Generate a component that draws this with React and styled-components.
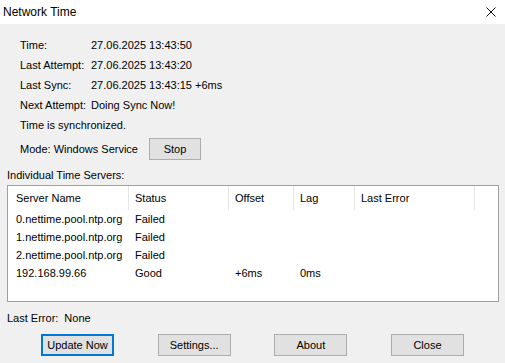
import React from 'react'
import styled, { createGlobalStyle } from 'styled-components';

const GlobalStyle = createGlobalStyle`
    html, body {
        margin: 0;
        padding: 0;
        background: #f0f0f0;
    }
    * {
        box-sizing: border-box;
    }
`;

const Window = styled.div`
    width: 505px;
    height: 363px;
    background: #f0f0f0;
    font-family: "Liberation Sans", Arial, sans-serif;
    font-size: 11px;
    color: #000;
    display: flex;
    flex-direction: column;
    overflow: hidden;
`;

const TitleBar = styled.div`
    height: 24px;
    background: #fff;
    display: flex;
    align-items: center;
    justify-content: space-between;
    padding: 0 8px 0 3px;
    font-size: 12px;
`;

const CloseIcon = styled.svg`
    width: 10px;
    height: 10px;
    margin-right: 1px;
`;

const InfoList = styled.div`
    display: grid;
    grid-template-columns: 71px auto;
    grid-auto-rows: 20px;
    align-items: center;
    padding-left: 20px;
    margin-top: 11px;
`;

const Wide = styled.div`
    grid-column: 1 / 3;
`;

const ModeRow = styled.div`
    display: flex;
    align-items: center;
    height: 22px;
    margin-top: 3px;
    padding-left: 20px;
`;

const ModeLabel = styled.span`
    width: 129px;
`;

const Button = styled.button`
    width: ${p => p.$w || 73}px;
    height: 22px;
    padding: 0;
    font-family: inherit;
    font-size: 11px;
    color: #000;
    background: #e1e1e1;
    border: 1px solid ${p => p.$default ? '#0078d7' : '#adadad'};
    box-shadow: ${p => p.$default ? 'inset 0 0 0 1px #0078d7' : 'none'};
    cursor: pointer;
`;

const GroupLabel = styled.div`
    line-height: 16px;
    margin-top: 7px;
    padding-left: 7px;
`;

const ListBox = styled.div`
    margin: 2px 0 0 7px;
    width: 492px;
    height: 117px;
    background: #fff;
    border: 1px solid #a0a0a0;
    display: grid;
    grid-template-columns: 121px 100px 65px 61px 120px 1fr;
    grid-template-rows: 24px repeat(4, 18px);
    align-content: start;
`;

const HeadCell = styled.div`
    display: flex;
    align-items: center;
    padding-left: ${p => p.$first ? 8 : 6}px;
    border-right: ${p => p.$last ? 'none' : '1px solid #e5e5e5'};
`;

const Cell = styled.div`
    display: flex;
    align-items: center;
    padding-left: ${p => p.$first ? 8 : 6}px;
`;

const StatusLine = styled.div`
    line-height: 16px;
    margin-top: 8px;
    padding-left: 7px;
    display: flex;
    gap: 6px;
`;

const ButtonRow = styled.div`
    display: flex;
    justify-content: space-between;
    padding: 0 41px;
    margin-top: 8px;
`;

const info = [
    ['Time:', '27.06.2025 13:43:50'],
    ['Last Attempt:', '27.06.2025 13:43:20'],
    ['Last Sync:', '27.06.2025 13:43:15 +6ms'],
    ['Next Attempt:', 'Doing Sync Now!'],
];

const columns = ['Server Name', 'Status', 'Offset', 'Lag', 'Last Error', ''];

const servers = [
    ['0.nettime.pool.ntp.org', 'Failed', '', '', ''],
    ['1.nettime.pool.ntp.org', 'Failed', '', '', ''],
    ['2.nettime.pool.ntp.org', 'Failed', '', '', ''],
    ['192.168.99.66', 'Good', '+6ms', '0ms', ''],
];

const App = () => {
  return (
    <Window>
        <GlobalStyle />
        <TitleBar>
            <span>Network Time</span>
            <CloseIcon viewBox="0 0 10 10">
                <path d="M0.5 0.5 L9.5 9.5 M9.5 0.5 L0.5 9.5" stroke="#111" strokeWidth="1" fill="none" />
            </CloseIcon>
        </TitleBar>

        <InfoList>
            {info.map(([k, v]) => (
                <React.Fragment key={k}>
                    <span>{k}</span>
                    <span>{v}</span>
                </React.Fragment>
            ))}
            <Wide>Time is synchronized.</Wide>
        </InfoList>

        <ModeRow>
            <ModeLabel>Mode: Windows Service</ModeLabel>
            <Button $w={52}>Stop</Button>
        </ModeRow>

        <GroupLabel>Individual Time Servers:</GroupLabel>
        <ListBox>
            {columns.map((c, i) => (
                <HeadCell key={i} $first={i === 0} $last={i === columns.length - 1}>{c}</HeadCell>
            ))}
            {servers.map((row, r) => (
                <React.Fragment key={r}>
                    {row.map((v, i) => (
                        <Cell key={i} $first={i === 0}>{v}</Cell>
                    ))}
                    <Cell />
                </React.Fragment>
            ))}
        </ListBox>

        <StatusLine>
            <span>Last Error:</span>
            <span>None</span>
        </StatusLine>

        <ButtonRow>
            <Button $default>Update Now</Button>
            <Button>Settings...</Button>
            <Button>About</Button>
            <Button>Close</Button>
        </ButtonRow>
    </Window>
  )
}

export default App
